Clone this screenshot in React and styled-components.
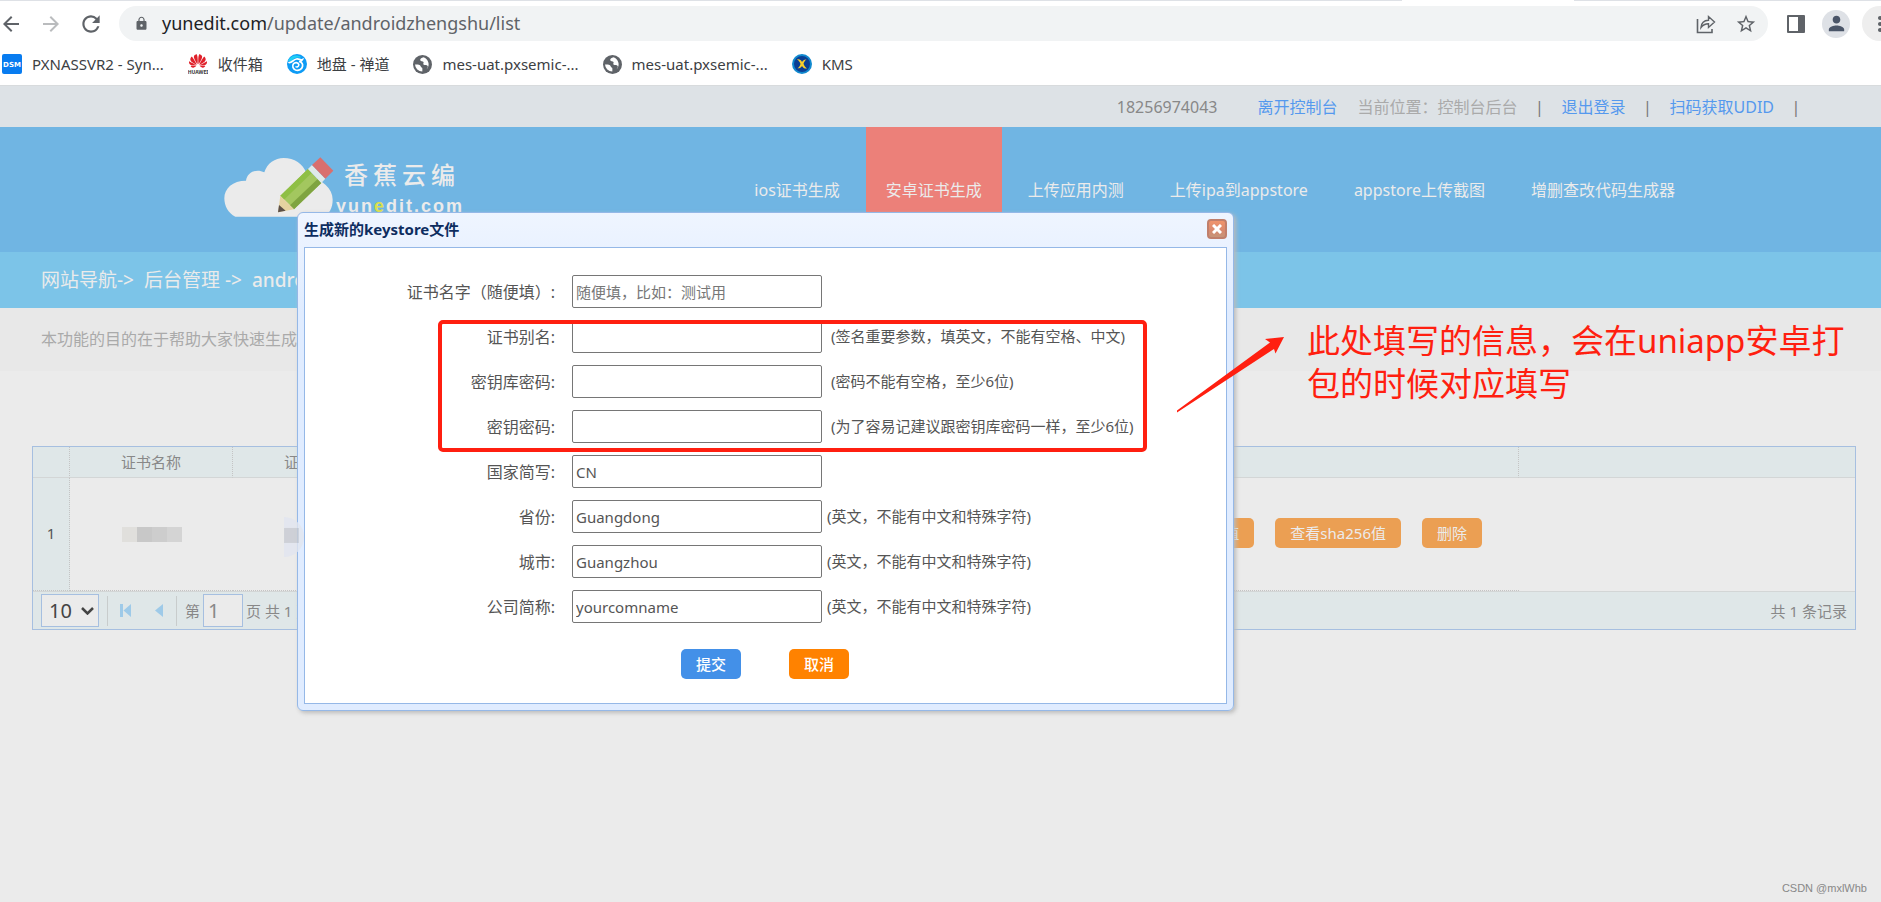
import styled, { createGlobalStyle } from 'styled-components';
import {
  MdArrowBack,
  MdArrowForward,
  MdLock,
  MdMoreVert,
  MdPerson,
  MdRefresh,
  MdStarBorder,
} from 'react-icons/md';
import { SiHuawei } from 'react-icons/si';

const GlobalStyle = createGlobalStyle`
  * {
    box-sizing: border-box;
  }
  body {
    margin: 0;
    background: #ebebeb;
    color: #555;
    font-family: 'Noto Sans', 'Noto Sans CJK SC', sans-serif;
    font-size: 15px;
    overflow: hidden;
  }
  button, input, select {
    font-family: inherit;
  }
  a {
    text-decoration: none;
  }
`;

/* browser */

const Browser = styled.header`
  background: #fff;
  height: 86px;
  border-bottom: 1px solid #d8dbdd;
`;
const TabStrip = styled.div`
  display: flex;
  height: 1px;
  justify-content: flex-end;
  background: #dee1e6;
  padding-right: 307px;
`;
const ActiveTab = styled.div`
  width: 172px;
  background: #fff;
`;
const Toolbar = styled.div`
  display: flex;
  align-items: center;
  padding-top: 5px;
  overflow: hidden;
`;
const NavIcons = styled.div`
  display: flex;
  gap: 20px;
  width: 119px;
  flex: none;
  padding-left: 1px;
`;
const IconButton = styled.button`
  display: flex;
  align-items: center;
  justify-content: center;
  width: ${(p) => p.$size || 20}px;
  height: ${(p) => p.$size || 20}px;
  flex: none;
  padding: 0;
  border: none;
  border-radius: 50%;
  background: ${(p) => p.$bg || 'transparent'};
  color: ${(p) => p.$color || '#5f6368'};
  svg {
    flex: none;
  }
`;
const AddressBar = styled.div`
  display: flex;
  align-items: center;
  flex: 1;
  height: 35px;
  padding: 0 12px 0 15px;
  border-radius: 18px;
  background: #f1f3f4;
  color: #5f6368;
`;
const Url = styled.div`
  flex: 1;
  margin-left: 13px;
  padding-bottom: 2px;
  font-size: 18px;
  line-height: 24px;
  b {
    color: #202124;
    font-weight: 400;
  }
`;
const AddressIcons = styled.div`
  display: flex;
  gap: 20px;
`;
const ToolIcons = styled.div`
  display: flex;
  align-items: center;
  gap: 12px;
  width: 113px;
  flex: none;
  padding-left: 14px;
`;
const Bookmarks = styled.nav`
  display: flex;
  gap: 24px;
  padding: 12px 2px 0;
`;
const Bookmark = styled.a`
  display: flex;
  align-items: center;
  gap: 10px;
  color: #3c4043;
  line-height: 22px;
  white-space: nowrap;
`;

const ShareIcon = () => (
  <svg width="20" height="20" viewBox="0 0 20 20" fill="none" stroke="#5f6368">
    <path d="M1.5 5v13.5H16V15" strokeWidth="1.6" />
    <path d="M5 13.5c.4-5 3-7 7.500-7.200V2.500L18.500 8l-6 5.500V9.800C9 9.900 7 10.800 5 13.500z" strokeWidth="1.4" />
  </svg>
);
const SidePanelIcon = () => (
  <svg width="18" height="18" viewBox="0 0 18 18">
    <rect width="18" height="18" rx="1" fill="#5f6368" />
    <rect x="2" y="2" width="9" height="14" fill="#fff" />
  </svg>
);
const DsmIcon = () => (
  <svg width="20" height="20" viewBox="0 0 20 20">
    <rect width="20" height="20" rx="2" fill="#087cf0" />
    <text x="10" y="13" fill="#fff" fontSize="7" fontWeight="700" textAnchor="middle" fontFamily="DejaVu Sans">
      DSM
    </text>
  </svg>
);
const HuaweiIcon = () => (
  <svg width="20" height="20" viewBox="0 0 20 20">
    <SiHuawei x="1" y="-2" size="18" color="#e0222b" />
    <text x="10" y="20" fill="#333" fontSize="5" fontWeight="700" textAnchor="middle">
      HUAWEI
    </text>
  </svg>
);
const WaveIcon = () => (
  <svg width="20" height="20" viewBox="0 0 20 20">
    <circle cx="10" cy="10" r="10" fill="#0d9bf5" />
    <path d="M1 7C3 1.500 10 0 14 3l-1 .7C9 3 6 4.500 4.500 7.500z" fill="#1fd0f5" />
    <path
      d="M2 8.500c3 .6 4-2.800 7.500-3.500 2.600-.5 3.500 1.500 6 .5-.8 1.800-2 2.300-3.500 2 2.600.6 4 2.500 3.500 5-.6 3-4 4.500-7 3.500-2.600-1-3.600-4-2-6.200C8 8 11 8.200 11.800 10.500"
      fill="none"
      stroke="#fff"
      strokeWidth="1.700"
      strokeLinecap="round"
    />
    <path d="M8.500 12.500c1.500 1 3 .3 3.300-1.500" fill="none" stroke="#fff" strokeWidth="1.500" />
  </svg>
);
const GlobeIcon = () => (
  <svg width="19" height="19" viewBox="0 0 19 19">
    <circle cx="9.500" cy="9.500" r="9.500" fill="#5f6368" />
    <path
      d="M2 9.500c2 .2 3.500-.2 5 .8 1 .8.500 1.900 1.800 2.300.9.300.5 1.500.5 4A7.500 7.500 0 0 1 2 9.500zM10.500 2.200c-2 .8-3.600 1.500-3.200 3 .5 1.300 2.500.5 3.200 1.800.5 1.200-.8 1.700 0 2.600 1 1 3.500.2 4.200 1.500.4 1-.5 2-1 3.200A7.500 7.500 0 0 0 10.500 2.200z"
      fill="#fff"
    />
  </svg>
);
const KmsIcon = () => (
  <svg width="20" height="20" viewBox="0 0 20 20">
    <circle cx="10" cy="10" r="9" fill="#0b3f94" stroke="#1189cf" strokeWidth="2" />
    <path d="M5 5.500c2.500-.5 4 .5 5 2.500 1-1.800 2.500-2.800 4.500-2.500-1.600 1-2.500 2.600-3 4.300.8 2 1.800 3.500 3.500 4.700-2.500.2-4-.8-5-2.600-1 1.800-2.600 2.600-4.500 2.400 1.600-1 2.500-2.500 3-4.300-.6-2-1.600-3.500-3.500-4.500z" fill="#f8cf2c" />
  </svg>
);

const bookmarks = [
  { Icon: DsmIcon, title: 'PXNASSVR2 - Syn...' },
  { Icon: HuaweiIcon, title: '收件箱' },
  { Icon: WaveIcon, title: '地盘 - 禅道' },
  { Icon: GlobeIcon, title: 'mes-uat.pxsemic-...' },
  { Icon: GlobeIcon, title: 'mes-uat.pxsemic-...' },
  { Icon: KmsIcon, title: 'KMS' },
];

/* site header */

const TopBar = styled.div`
  display: flex;
  justify-content: flex-end;
  height: 41px;
  padding-right: 63px;
  background: #dde2e6;
  color: #aaa;
  font-size: 16px;
  line-height: 42px;
  white-space: nowrap;
`;
const TopLink = styled.a`
  color: #5599ee;
`;
const Phone = styled.span`
  margin-right: 40px;
  color: #888;
`;
const Place = styled.span`
  margin-left: 20px;
`;
const Divider = styled.span`
  width: 44px;
  text-align: center;
  color: #777;
`;
const SiteHeader = styled.div`
  display: flex;
  justify-content: space-between;
  height: 125px;
  padding: 0 186px 0 224px;
  background: #70b5e3;
`;
const Logo = styled.a`
  display: flex;
  padding-top: 30px;
  color: #ebebeb;
`;
const LogoText = styled.div`
  padding-left: 2px;
`;
const LogoName = styled.div`
  padding-left: 8px;
  font-size: 24px;
  font-weight: 500;
  line-height: 36px;
  letter-spacing: 5px;
`;
const LogoDomain = styled.div`
  font-family: 'Liberation Sans', sans-serif;
  font-size: 18px;
  font-weight: 700;
  line-height: 26px;
  letter-spacing: 2px;
  span {
    color: #dce04c;
  }
`;
const Menu = styled.nav`
  display: flex;
  gap: 6px;
`;
const MenuItem = styled.a`
  padding: 0 20px;
  background: ${(p) => (p.$active ? '#ec8079' : 'transparent')};
  color: #ebebeb;
  font-size: 16px;
  line-height: 126px;
  white-space: nowrap;
`;
const Breadcrumb = styled.div`
  display: flex;
  gap: 10px;
  height: 56px;
  padding-left: 41px;
  background: #7cc4e8;
  color: #ebebeb;
  font-size: 19px;
  line-height: 56px;
  b {
    font-weight: 500;
  }
`;
const Description = styled.p`
  height: 63px;
  margin: 0 0 75px;
  padding-left: 41px;
  background: #e8e8e8;
  color: #aaa;
  font-size: 16px;
  line-height: 63px;
`;

const menu = ['ios证书生成', '安卓证书生成', '上传应用内测', '上传ipa到appstore', 'appstore上传截图', '增删查改代码生成器'];

const CloudLogo = () => (
  <svg width="110" height="60" viewBox="26 36 330 180">
    <path
      d="M60 215C38 205 27 182 27 160c0-30 25-53 65-53 3-24 30-38 55-25 8-27 32-43 58-43 32 0 58 17 68 45 50 25 79 45 79 80 0 25-10 43-30 51z"
      fill="#ebebeb"
    />
    <path d="M195 152l83-80 40 42-82 79z" fill="#a3c75f" />
    <path d="M195 152l83-80 11 12-83 80z" fill="#8fbf45" />
    <path d="M224 181l83-79 11 12-82 79z" fill="#7fa440" />
    <path d="M278 72l12-12 40 41-12 13z" fill="#dfeaea" />
    <path d="M290 60l25-23 39 40-24 24z" fill="#d96f6e" />
    <path d="M195 152l41 41-48 9z" fill="#e5d3a0" />
    <path d="M188 202l3-22 20 17z" fill="#5c5048" />
  </svg>
);

/* grid */

const Grid = styled.section`
  margin: 0 25px 0 32px;
  border: 1px solid #a6bfe0;
  color: #888;
`;
const Table = styled.table`
  width: 100%;
  border-collapse: separate;
  border-spacing: 0;
  table-layout: fixed;
`;
const Col = styled.col`
  width: ${(p) => (p.$width ? `${p.$width}px` : 'auto')};
`;
const Th = styled.th`
  height: 31px;
  padding: 0;
  border-bottom: 1px solid #d3d6d6;
  border-right: ${(p) => (p.$last ? 'none' : '1px dotted #c4c4c4')};
  background: #dfe7e8;
  font-weight: 400;
  line-height: 22px;
`;
const Td = styled.td`
  height: 113px;
  padding: 0 0 2px;
  border-bottom: ${(p) => (p.$last ? 'none' : '1px dotted #c4c4c4')};
`;
const IndexTd = styled(Td)`
  border-right: 1px dotted #c4c4c4;
  background: #dfe7e8;
  color: #555;
  text-align: center;
`;
const Actions = styled.div`
  display: flex;
  justify-content: flex-end;
  gap: 21px;
  padding-right: 37px;
`;
const ActionButton = styled.button`
  height: 30px;
  padding: 0 15px;
  border: none;
  border-radius: 5px;
  background: #eb9f53;
  color: #ebebeb;
  font-size: 15px;
  line-height: 30px;
`;
const Mosaic = styled.div`
  display: flex;
  width: 60px;
  margin: 2px auto 0;
`;
const Tile = styled.i`
  width: 15px;
  height: 15px;
  background: ${(p) => p.$tone};
`;
const Pager = styled.div`
  display: flex;
  align-items: center;
  height: 38px;
  padding: 0 8px;
  border-top: 1px solid #d3d6d6;
  background: #dfe7e8;
  line-height: 22px;
`;
const SelectBox = styled.label`
  display: flex;
  align-items: center;
  position: relative;
  svg {
    position: absolute;
    right: 5px;
    pointer-events: none;
  }
`;
const PageSize = styled.select`
  width: 58px;
  height: 33px;
  padding: 0 0 0 7px;
  border: 1px solid #a6bfe0;
  border-radius: 0;
  appearance: none;
  background: #ebebeb;
  color: #444;
  font-size: 20px;
`;
const PagerButtons = styled.div`
  display: flex;
  margin: 0 8px;
  padding: 2px 0;
  border: solid #c8cccc;
  border-width: 0 1px;
`;
const PagerButton = styled.button`
  display: flex;
  width: 34px;
  height: 26px;
  padding: 0;
  align-items: center;
  justify-content: center;
  border: none;
  background: none;
  color: #9ecae8;
`;
const PageInput = styled.input`
  width: 40px;
  height: 33px;
  margin: 0 3px;
  padding: 0 4px;
  border: 1px solid #a6bfe0;
  background: #ebebeb;
  color: #888;
  font-size: 20px;
`;
const Total = styled.span`
  margin-left: auto;
`;

/* dialog */

const Page = styled.div`
  position: relative;
  min-height: 100vh;
`;
const Dialog = styled.div`
  position: absolute;
  top: 212px;
  left: 297px;
  width: 937px;
  padding: 0 6px 6px;
  border: 1px solid #95b8e7;
  border-radius: 6px;
  background: linear-gradient(#eff5ff, #e0ecff 20%);
  box-shadow: 2px 2px 4px #bbb;
`;
const DialogHead = styled.div`
  display: flex;
  align-items: center;
  justify-content: space-between;
  height: 34px;
  padding-bottom: 2px;
`;
const DialogTitle = styled.h2`
  margin: 0;
  color: #0e2d5f;
  font-size: 15px;
  font-weight: 700;
  line-height: 22px;
`;
const CloseButton = styled.button`
  display: flex;
  align-items: center;
  justify-content: center;
  width: 20px;
  height: 20px;
  padding: 0;
  border: 2px solid #c07f6c;
  border-radius: 4px;
  background: linear-gradient(#f0946c, #d8896f 60%, #c5957a);
  color: #fff;
`;
const Form = styled.form`
  display: flex;
  flex-direction: column;
  gap: 12px;
  padding: 27px 0 24px;
  border: 1px solid #95b8e7;
  background: #fff;
`;
const Field = styled.div`
  display: flex;
  align-items: center;
  height: 33px;
`;
const Label = styled.label`
  width: 250px;
  margin-right: 17px;
  padding-bottom: 2px;
  font-size: 16px;
  text-align: right;
`;
const Input = styled.input`
  width: 250px;
  height: 33px;
  padding: 0 3px;
  border: 1px solid #767676;
  border-radius: 2px;
  color: #555;
  font-size: 15px;
  &::placeholder {
    color: #777;
  }
`;
const Hint = styled.span`
  margin-left: ${(p) => (p.$wide ? 9 : 5)}px;
  padding-bottom: 2px;
`;
const FormButtons = styled.div`
  display: flex;
  gap: 48px;
  margin: 14px 0 0 376px;
`;
const FormButton = styled.button`
  width: 60px;
  height: 30px;
  padding: 0 0 2px;
  border: none;
  border-radius: 5px;
  background: ${(p) => (p.$cancel ? '#ff8200' : '#4390e8')};
  color: #fff;
  font-size: 15px;
  font-weight: 500;
`;

const fields = [
  { id: 'name', label: '证书名字（随便填）:', placeholder: '随便填，比如：测试用' },
  { id: 'alias', label: '证书别名:', hint: '(签名重要参数，填英文，不能有空格、中文)', wide: true },
  { id: 'storepass', label: '密钥库密码:', hint: '(密码不能有空格，至少6位)', wide: true },
  { id: 'keypass', label: '密钥密码:', hint: '(为了容易记建议跟密钥库密码一样，至少6位)', wide: true },
  { id: 'country', label: '国家简写:', value: 'CN' },
  { id: 'province', label: '省份:', value: 'Guangdong', hint: '(英文，不能有中文和特殊字符)' },
  { id: 'city', label: '城市:', value: 'Guangzhou', hint: '(英文，不能有中文和特殊字符)' },
  { id: 'company', label: '公司简称:', value: 'yourcomname', hint: '(英文，不能有中文和特殊字符)' },
];

/* notes drawn over the page */

const Frame = styled.div`
  position: absolute;
  top: 320px;
  left: 438px;
  width: 709px;
  height: 132px;
  border: 4px solid #ff1f10;
  border-radius: 5px;
  pointer-events: none;
`;
const Arrow = styled.svg`
  position: absolute;
  top: 334px;
  left: 1174px;
`;
const Note = styled.p`
  position: absolute;
  top: 319px;
  left: 1307px;
  margin: 0;
  color: #ff1f10;
  font-size: 33px;
  line-height: 43px;
  white-space: nowrap;
`;
const Halo = styled.div`
  position: absolute;
  top: 517px;
  left: 284px;
  width: 20px;
  height: 40px;
  padding-top: 11px;
  border-radius: 0 20px 20px 0;
  background: #e2e6f0;
  opacity: 0.8;
`;
const HaloTile = styled.div`
  width: 15px;
  height: 15px;
  background: #c9ccd4;
`;
const Watermark = styled.div`
  position: absolute;
  right: 14px;
  bottom: 6px;
  color: #888;
  font-family: 'Liberation Sans', sans-serif;
  font-size: 11px;
  line-height: 16px;
`;

const BrowserBar = () => (
  <Browser>
    <TabStrip>
      <ActiveTab />
    </TabStrip>
    <Toolbar>
      <NavIcons>
        <IconButton aria-label="后退">
          <MdArrowBack size={24} />
        </IconButton>
        <IconButton aria-label="前进" $color="#babcbe">
          <MdArrowForward size={24} />
        </IconButton>
        <IconButton aria-label="刷新">
          <MdRefresh size={26} />
        </IconButton>
      </NavIcons>
      <AddressBar>
        <MdLock size={15} />
        <Url>
          <b>yunedit.com</b>/update/androidzhengshu/list
        </Url>
        <AddressIcons>
          <IconButton aria-label="分享">
            <ShareIcon />
          </IconButton>
          <IconButton aria-label="收藏">
            <MdStarBorder size={22} />
          </IconButton>
        </AddressIcons>
      </AddressBar>
      <ToolIcons>
        <IconButton aria-label="侧边栏" $size={28}>
          <SidePanelIcon />
        </IconButton>
        <IconButton aria-label="用户" $size={28} $bg="#dee1e6" $color="#4a5568">
          <MdPerson size={23} />
        </IconButton>
        <IconButton aria-label="菜单" $size={35} $bg="#eeeeee">
          <MdMoreVert size={24} />
        </IconButton>
      </ToolIcons>
    </Toolbar>
    <Bookmarks>
      {bookmarks.map(({ Icon, title }, i) => (
        <Bookmark href="#" key={i}>
          <Icon />
          {title}
        </Bookmark>
      ))}
    </Bookmarks>
  </Browser>
);

const CertGrid = () => (
  <Grid>
    <Table>
      <colgroup>
        <Col $width={37} />
        <Col $width={163} />
        <Col $width={163} />
        <Col />
        <Col $width={336} />
      </colgroup>
      <thead>
        <tr>
          <Th />
          <Th>证书名称</Th>
          <Th>证书别名</Th>
          <Th>操作</Th>
          <Th $last />
        </tr>
      </thead>
      <tbody>
        <tr>
          <IndexTd>1</IndexTd>
          <Td>
            <Mosaic>
              <Tile $tone="#e0dfdc" />
              <Tile $tone="#c8c8c8" />
              <Tile $tone="#cdcdcd" />
              <Tile $tone="#d4d4d4" />
            </Mosaic>
          </Td>
          <Td>
            <Mosaic>
              <Tile $tone="#e3e3e4" />
            </Mosaic>
          </Td>
          <Td>
            <Actions>
              <ActionButton>查看md5值</ActionButton>
              <ActionButton>查看sha256值</ActionButton>
              <ActionButton>删除</ActionButton>
            </Actions>
          </Td>
          <Td $last />
        </tr>
      </tbody>
    </Table>
    <Pager>
      <SelectBox>
        <PageSize aria-label="每页条数" defaultValue="10">
          <option>10</option>
          <option>20</option>
        </PageSize>
        <svg width="13" height="8" viewBox="0 0 13 8" fill="none" stroke="#444" strokeWidth="2.500">
          <path d="M1 1l5.500 5.500L12 1" />
        </svg>
      </SelectBox>
      <PagerButtons>
        <PagerButton aria-label="第一页">
          <svg width="11" height="13" viewBox="0 0 11 13" fill="currentColor">
            <path d="M0 0h3v13H0zM11 0v13L3.500 6.500z" />
          </svg>
        </PagerButton>
        <PagerButton aria-label="上一页">
          <svg width="8" height="13" viewBox="0 0 8 13" fill="currentColor">
            <path d="M8 0v13L0 6.500z" />
          </svg>
        </PagerButton>
      </PagerButtons>
      第
      <PageInput aria-label="页码" defaultValue="1" />
      页 共 1 页
      <Total>共 1 条记录</Total>
    </Pager>
  </Grid>
);

const KeystoreDialog = () => (
  <Dialog role="dialog" aria-labelledby="dialog-title">
    <DialogHead>
      <DialogTitle id="dialog-title">生成新的keystore文件</DialogTitle>
      <CloseButton aria-label="关闭">
        <svg width="10" height="10" viewBox="0 0 10 10" stroke="#fff" strokeWidth="3">
          <path d="M1 1l8 8M9 1L1 9" />
        </svg>
      </CloseButton>
    </DialogHead>
    <Form>
      {fields.map((field) => (
        <Field key={field.id}>
          <Label htmlFor={field.id}>{field.label}</Label>
          <Input id={field.id} defaultValue={field.value} placeholder={field.placeholder} />
          {field.hint && <Hint $wide={field.wide}>{field.hint}</Hint>}
        </Field>
      ))}
      <FormButtons>
        <FormButton type="submit">提交</FormButton>
        <FormButton type="button" $cancel>
          取消
        </FormButton>
      </FormButtons>
    </Form>
  </Dialog>
);

const App = () => {
  return (
    <Page>
      <GlobalStyle />
      <BrowserBar />
      <TopBar>
        <Phone>18256974043</Phone>
        <TopLink href="#">离开控制台</TopLink>
        <Place>当前位置：控制台后台</Place>
        <Divider>|</Divider>
        <TopLink href="#">退出登录</TopLink>
        <Divider>|</Divider>
        <TopLink href="#">扫码获取UDID</TopLink>
        <Divider>|</Divider>
      </TopBar>
      <SiteHeader>
        <Logo href="#">
          <CloudLogo />
          <LogoText>
            <LogoName>香蕉云编</LogoName>
            <LogoDomain>
              yun<span>e</span>dit.com
            </LogoDomain>
          </LogoText>
        </Logo>
        <Menu>
          {menu.map((item, i) => (
            <MenuItem href="#" key={item} $active={i === 1}>
              {item}
            </MenuItem>
          ))}
        </Menu>
      </SiteHeader>
      <Breadcrumb>
        <span>网站导航-&gt;</span>
        <span>后台管理 -&gt;</span>
        <b>android证书</b>
      </Breadcrumb>
      <Description>本功能的目的在于帮助大家快速生成安卓证书</Description>
      <CertGrid />
      <KeystoreDialog />
      <Halo>
        <HaloTile />
      </Halo>
      <Frame />
      <Arrow width="114" height="82" viewBox="0 0 114 82" fill="#ff1f10">
        <path d="M110 3L91 5l5 3.500L3 76.500v2L100 15l1.500 4.500z" />
      </Arrow>
      <Note>
        此处填写的信息，会在uniapp安卓打
        <br />
        包的时候对应填写
      </Note>
      <Watermark>CSDN @mxlWhb</Watermark>
    </Page>
  );
};

export default App;
